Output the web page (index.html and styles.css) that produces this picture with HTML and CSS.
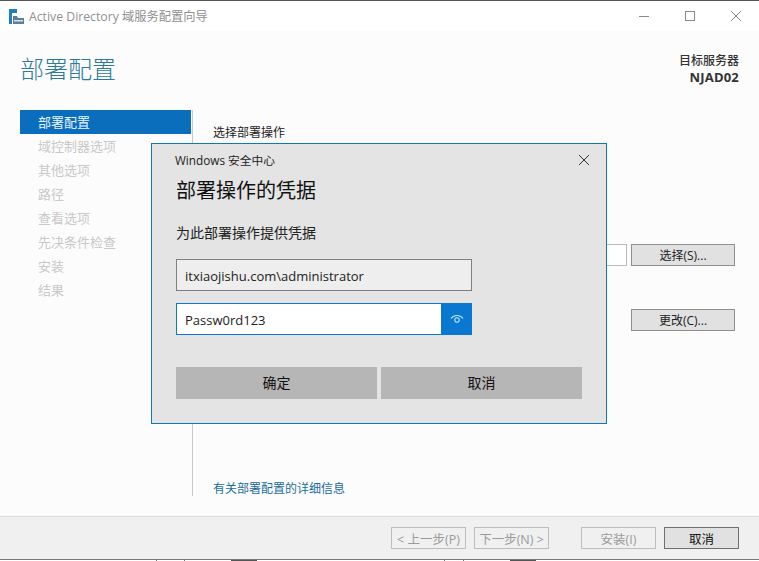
FILE: index.html
```html
<!DOCTYPE html>
<html lang="zh-CN">

<head>
    <meta charset="UTF-8">
    <meta name="viewport" content="width=device-width, initial-scale=1.0">
    <title>Active Directory 域服务配置向导</title>
    <link rel="stylesheet" href="styles.css">
</head>

<body>

    <div class="window">
        <div class="titlebar">
            <svg class="app-icon" width="15" height="15" viewBox="0 0 15 15">
                <rect x="0" y="0" width="8" height="4" fill="#1b7fc4" />
                <rect x="0" y="4" width="3" height="11" fill="#1b7fc4" />
                <path d="M4 7h4l1 2h6v6H4z" fill="#5d7f96" />
                <rect x="5" y="11" width="9" height="1.5" fill="#d5e3ec" />
            </svg>
            <span class="title-text">Active Directory 域服务配置向导</span>
            <div class="window-controls">
                <svg width="12" height="12" viewBox="0 0 12 12">
                    <path d="M1 6.5h10" stroke="#8a8a8a" fill="none" />
                </svg>
                <svg width="12" height="12" viewBox="0 0 12 12">
                    <rect x="1.5" y="1.5" width="9" height="9" stroke="#8a8a8a" fill="none" />
                </svg>
                <svg width="12" height="12" viewBox="0 0 12 12">
                    <path d="M1 1l10 10M11 1L1 11" stroke="#8a8a8a" fill="none" />
                </svg>
            </div>
        </div>

        <div class="main">
            <div class="page-header">
                <h1>部署配置</h1>
                <div class="target">
                    <div>目标服务器</div>
                    <div class="target-name">NJAD02</div>
                </div>
            </div>

            <div class="page-body">
                <ul class="steps">
                    <li class="active">部署配置</li>
                    <li>域控制器选项</li>
                    <li>其他选项</li>
                    <li>路径</li>
                    <li>查看选项</li>
                    <li>先决条件检查</li>
                    <li>安装</li>
                    <li>结果</li>
                </ul>

                <div class="content">
                    <div class="section-label">选择部署操作</div>
                    <div class="row row-select">
                        <div class="domain-input"></div>
                        <button class="btn-side">选择(S)...</button>
                    </div>
                    <div class="row row-change">
                        <button class="btn-side">更改(C)...</button>
                    </div>
                    <a class="more-link">有关部署配置的详细信息</a>
                </div>
            </div>
        </div>

        <div class="footer">
            <button class="btn-foot off">&lt; 上一步(P)</button>
            <button class="btn-foot off">下一步(N) &gt;</button>
            <button class="btn-foot off install">安装(I)</button>
            <button class="btn-foot cancel">取消</button>
        </div>

        <!-- 窗口下方露出的一点内容 -->
        <div class="under-strip">
            <i class="tick t1"></i>
            <i class="tick t2"></i>
            <i class="peek p1"></i>
            <i class="tick t3"></i>
            <i class="tick t4"></i>
            <i class="peek p2"></i>
        </div>
    </div>

    <!-- 凭据弹窗 -->
    <div class="dialog">
        <div class="dialog-top">
            <span>Windows 安全中心</span>
            <svg width="12" height="12" viewBox="0 0 12 12">
                <path d="M1 1l10 10M11 1L1 11" stroke="#333" fill="none" />
            </svg>
        </div>
        <h2>部署操作的凭据</h2>
        <p>为此部署操作提供凭据</p>
        <div class="field user-field">itxiaojishu.com\administrator</div>
        <div class="password-row">
            <div class="field password-field">Passw0rd123</div>
            <div class="eye-btn">
                <svg width="14" height="12" viewBox="0 0 14 12">
                    <path d="M1 5.5C4 1.5 10 1.5 13 5.5" stroke="#bfe3ff" fill="none" stroke-width="1.1" />
                    <circle cx="7" cy="7" r="2.2" stroke="#bfe3ff" fill="none" stroke-width="1.1" />
                </svg>
            </div>
        </div>
        <div class="dialog-buttons">
            <button>确定</button>
            <button>取消</button>
        </div>
    </div>

</body>

</html>
```

FILE: styles.css
```css
* {
    box-sizing: border-box;
}

body {
    margin: 0;
    width: 759px;
    height: 561px;
    overflow: hidden;
    position: relative;
    background-color: #fff;
    font-family: 'Open Sans', 'Noto Sans CJK SC', sans-serif;
    font-size: 13px;
    color: #222;
}

.window {
    height: 561px;
    display: flex;
    flex-direction: column;
    border-top: 1px solid #555;
}

.titlebar {
    height: 30px;
    flex: none;
    display: flex;
    align-items: center;
    padding-left: 9px;
    background-color: #fff;
    color: #8f8f8f;
}

.app-icon {
    margin-right: 5px;
}

.title-text {
    font-size: 12.25px;
}

.window-controls {
    margin-left: auto;
    display: flex;
    gap: 34px;
    padding-right: 17px;
}

.main {
    flex: 1;
    display: flex;
    flex-direction: column;
    background-color: #fcfcfc;
}

.page-header {
    height: 79px;
    flex: none;
    display: flex;
    justify-content: space-between;
    padding: 22px 20px 0;
}

h1 {
    margin: 0;
    font-size: 24px;
    font-weight: 300;
    line-height: 32px;
    color: #2a7a98;
}

.target {
    text-align: right;
    font-size: 12px;
    line-height: 16px;
    font-weight: 500;
    color: #333;
}

.target-name {
    font-weight: 700;
    font-size: 13px;
    letter-spacing: 0.2px;
}

.page-body {
    flex: 1;
    display: flex;
    padding-bottom: 20px;
}

.steps {
    list-style: none;
    margin: 0 0 0 20px;
    padding: 0;
    width: 173px;
    flex: none;
    border-right: 1px solid #c8c8c8;
}

.steps li {
    height: 24px;
    line-height: 24px;
    padding-left: 18px;
    color: #c9c9c9;
}

.steps li.active {
    background-color: #0a6ebd;
    color: #e8f4fb;
    width: 171px;
}

.content {
    flex: 1;
    position: relative;
    display: flex;
    flex-direction: column;
    padding: 13px 24px 0 20px;
}

.section-label {
    font-size: 12px;
    line-height: 20px;
}

.row {
    display: flex;
    justify-content: flex-end;
    gap: 4px;
}

.row-select {
    margin-top: 101px;
}

.row-change {
    margin-top: 43px;
}

.domain-input {
    width: 40px;
    height: 22px;
    background-color: #fff;
    border: 1px solid #bbb;
}

.btn-side {
    width: 104px;
    height: 22px;
    padding: 0;
    border: 1px solid #8f8f8f;
    background-color: #e1e1e1;
    font-family: inherit;
    font-size: 12px;
    color: #222;
}

.more-link {
    margin-top: auto;
    margin-bottom: -2px;
    font-size: 12px;
    line-height: 18px;
    color: #1a6c9c;
}

.footer {
    height: 43px;
    flex: none;
    display: flex;
    align-items: center;
    padding-left: 391px;
    gap: 8px;
    background-color: #f0f0f0;
    border-top: 1px solid #dcdcdc;
}

.btn-foot {
    width: 75px;
    height: 22px;
    padding: 0;
    font-family: inherit;
    font-size: 12.5px;
    background-color: #f0f0f0;
    border: 1px solid #bdbdbd;
    color: #9a9a9a;
}

.btn-foot.install {
    margin-left: 24px;
}

.btn-foot.cancel {
    background-color: #e1e1e1;
    border-color: #6f6f6f;
    color: #111;
}

.under-strip {
    height: 2px;
    flex: none;
    display: flex;
    overflow: hidden;
    background-color: #fff;
    border-top: 1px solid #777;
}

.tick {
    width: 1px;
    height: 1px;
    background-color: #777;
}

.t1 {
    margin-left: 156px;
}

.t2 {
    margin-left: 27px;
}

.t3 {
    margin-left: 187px;
}

.t4 {
    margin-left: 18px;
}

.peek {
    width: 26px;
    height: 1px;
    background-color: #555;
}

.p1 {
    margin-left: 46px;
}

.p2 {
    margin-left: 46px;
}

.dialog {
    position: absolute;
    left: 151px;
    top: 143px;
    width: 456px;
    height: 281px;
    padding: 0 24px;
    background-color: #e4e4e4;
    border: 1px solid #0f78b8;
}

.dialog-top {
    display: flex;
    justify-content: space-between;
    align-items: center;
    height: 31px;
    padding-right: 0;
    margin-right: -8px;
    margin-left: -1px;
    font-size: 11.75px;
    color: #222;
}

.dialog h2 {
    margin: 0;
    font-size: 20px;
    font-weight: 400;
    line-height: 32px;
    color: #111;
}

.dialog p {
    margin: 17px 0 0;
    font-size: 14px;
    line-height: 18px;
}

.field {
    height: 32px;
    line-height: 32px;
    padding-left: 8px;
    font-size: 13px;
    color: #222;
}

.user-field {
    width: 296px;
    margin-top: 17px;
    background-color: #eee;
    border: 1px solid #808080;
}

.password-row {
    display: flex;
    width: 296px;
    margin-top: 12px;
}

.password-field {
    flex: 1;
    background-color: #fff;
    border: 1px solid #0a78d0;
    border-right: none;
}

.eye-btn {
    width: 31px;
    height: 32px;
    display: flex;
    align-items: center;
    justify-content: center;
    background-color: #0a78d0;
}

.dialog-buttons {
    display: flex;
    gap: 4px;
    margin-top: 32px;
}

.dialog-buttons button {
    width: 201px;
    height: 32px;
    padding: 0 0 2px;
    border: none;
    background-color: #b6b6b6;
    font-family: inherit;
    font-size: 14px;
    color: #111;
}
```
